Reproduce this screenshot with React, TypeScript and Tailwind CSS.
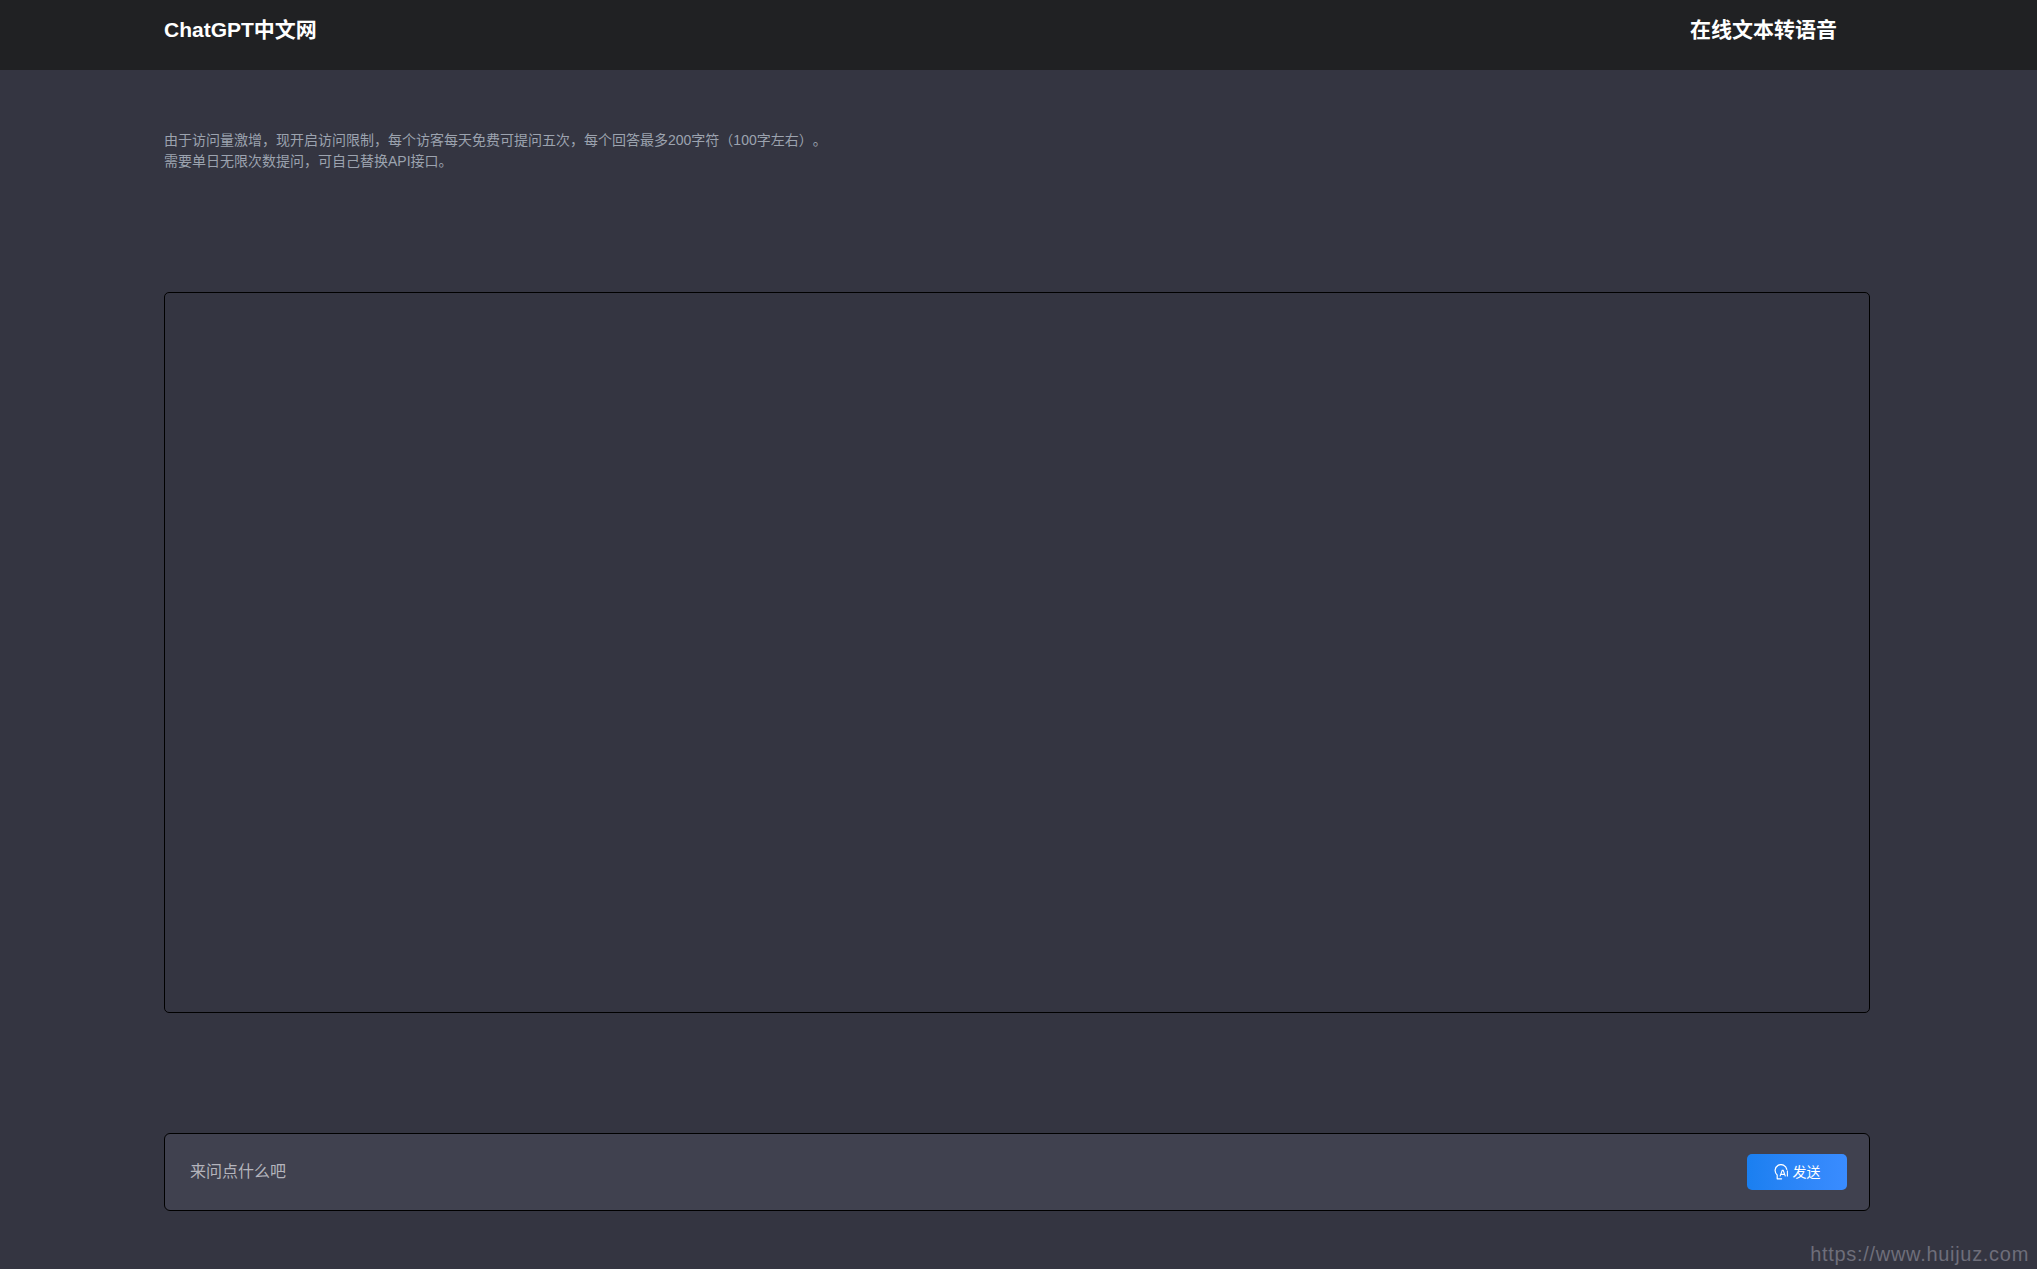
import React from 'react';

const SendIcon = () => (
  <svg width="15" height="16" viewBox="0 0 15 16" fill="none" className="shrink-0">
    <path d="M12.8 5.4A5.9 5.9 0 1 0 3.2 11V14.8H7.6" stroke="white" strokeWidth="1.2" strokeLinecap="round" strokeLinejoin="round" />
    <path d="M6 12.4 8.2 6.4H9.2L11.4 12.4M6.9 10.4H10.6M13.4 6.4V12.4" stroke="white" strokeWidth="1.1" />
  </svg>
);

const App = () => {
  return (
    <div className="relative flex flex-col h-screen overflow-hidden bg-[#343541] font-['Liberation_Sans','Noto_Sans_CJK_SC',sans-serif] [text-spacing-trim:space-all]">
      <header className="h-[70px] shrink-0 bg-[#202123] pl-[164px] pr-[200px] pt-[16px] flex justify-between items-start font-bold text-white">
        <div className="text-[21px] leading-[28px]">ChatGPT中文网</div>
        <div className="text-[21px] leading-[28px]">在线文本转语音</div>
      </header>

      <main className="flex-1 flex flex-col px-[164px] pr-[167px]">
        <div className="mt-[60px] text-[14px] leading-[21px] text-[#9ca3af]">
          <p>由于访问量激增，现开启访问限制，每个访客每天免费可提问五次，每个回答最多200字符（100字左右）。</p>
          <p>需要单日无限次数提问，可自己替换API接口。</p>
        </div>

        <div className="mt-[120px] h-[721px] rounded-[5px] border border-black" />

        <div className="mt-[120px] h-[78px] rounded-[6px] border border-black bg-[#40414f] pl-[25px] pr-[22px] flex items-center justify-between">
          <span className="text-[16px] text-[#b4b4bc]">来问点什么吧</span>
          <button className="w-[100px] h-[36px] rounded-[5px] bg-gradient-to-r from-[#1a7ff0] to-[#3a8cff] flex items-center justify-center gap-[4px] text-[14px] text-white">
            <SendIcon />
            <span>发送</span>
          </button>
        </div>
      </main>

      <div className="absolute right-[8px] bottom-[2px] text-[20px] tracking-[0.7px] leading-[26px] text-[#6e6e7a]">https://www.huijuz.com</div>
    </div>
  );
};

export default App;
